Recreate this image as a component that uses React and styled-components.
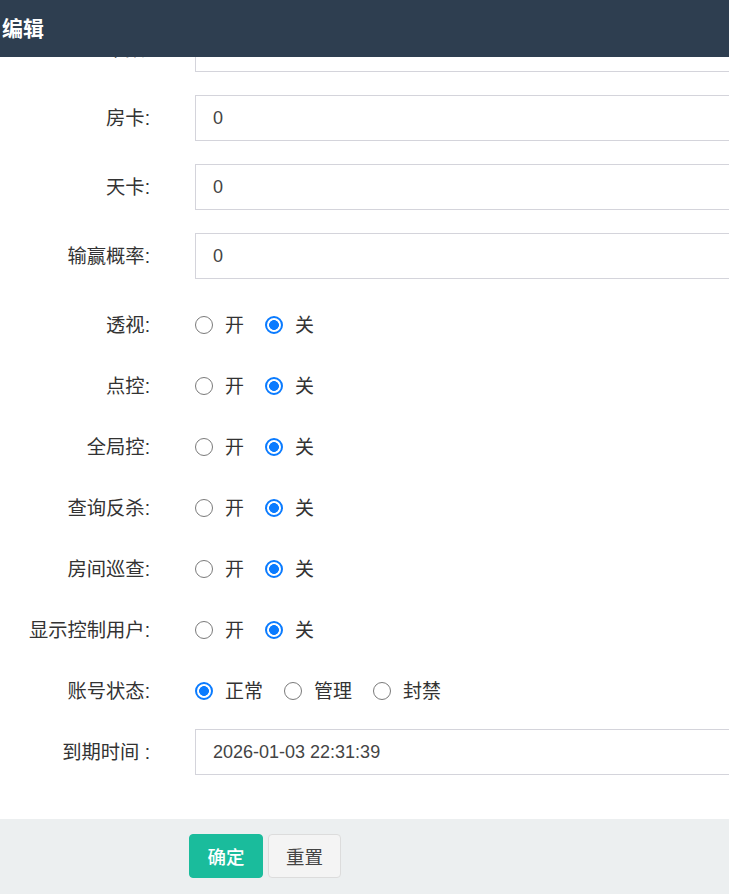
import React from "react";
import styled, { createGlobalStyle } from "styled-components";

const Global = createGlobalStyle`
  html, body { margin: 0; padding: 0; background: #fff; overflow: hidden; }
  * { box-sizing: border-box; }
  body { font-family: "Liberation Sans", "Noto Sans CJK SC", sans-serif; }
`;

const Layer = styled.div`
  display: flex;
  flex-direction: column;
  width: 100%;
  height: 894px;
  overflow: hidden;
  background: #fff;
`;

const Title = styled.div`
  flex: 0 0 57px;
  height: 57px;
  display: flex;
  align-items: center;
  padding: 0 0 4px 2px;
  background: #2e3e50;
  color: #fff;
  font-size: 21px;
  font-weight: bold;
  position: relative;
  z-index: 1;
`;

const Content = styled.div`
  flex: 1 1 auto;
  overflow: hidden;
`;

/* the form is scrolled: its first row sits partly under the title bar */
const Form = styled.div`
  display: flex;
  flex-direction: column;
  margin-top: -31px;
`;

const Row = styled.div`
  display: flex;
  align-items: center;
  height: ${(p) => (p.$radio ? "38px" : "46px")};
  padding-top: ${(p) => (p.$radio ? "8px" : "0")};
  margin-bottom: 23px;
`;

const Label = styled.div`
  flex: 0 0 150px;
  margin-right: 45px;
  text-align: right;
  font-size: 19.3px;
  line-height: 1;
  padding-top: ${(p) => (p.$radio ? "1px" : "2px")};
  color: #333;
  white-space: nowrap;
`;

const Input = styled.input`
  flex: 1 1 auto;
  min-width: 0;
  height: 46px;
  margin-right: -4px;
  border: 1px solid #d4d4db;
  border-radius: 0;
  padding: 0 0 0 17px;
  font-family: "Liberation Sans", "Noto Sans CJK SC", sans-serif;
  font-size: 18px;
  color: #444;
  background: #fff;
  outline: none;
`;

const RadioGroup = styled.div`
  display: flex;
  align-items: center;
`;

const Option = styled.label`
  display: flex;
  align-items: center;
  margin-right: 21px;
  font-size: 19px;
  line-height: 1;
  color: #333;
  cursor: pointer;
`;

const RadioInput = styled.input`
  appearance: none;
  -webkit-appearance: none;
  width: 18px;
  height: 18px;
  margin: 0 12px 0 0;
  border-radius: 50%;
  border: 1.5px solid #7a7a7a;
  background: #fff;
  &:checked {
    border: 2px solid #0a7bff;
    background: radial-gradient(circle, #0a7bff 0 4.6px, #fff 5.2px);
  }
`;

const Footer = styled.div`
  flex: 0 0 75px;
  background: #eceff0;
  display: flex;
  align-items: flex-start;
  padding: 15px 0 0 189px;
  gap: 5px;
`;

const Button = styled.button`
  height: 44px;
  width: ${(p) => p.$w}px;
  border-radius: 4px;
  font-family: "Liberation Sans", "Noto Sans CJK SC", sans-serif;
  font-size: 18.5px;
  cursor: pointer;
  padding: 0;
  border: 1px solid ${(p) => (p.$primary ? "#1abc9c" : "#dcdcdc")};
  background: ${(p) => (p.$primary ? "#1abc9c" : "#f4f4f4")};
  color: ${(p) => (p.$primary ? "#fff" : "#444")};
  font-weight: ${(p) => (p.$primary ? 500 : 400)};
`;

const inputRows = [
  { label: "金币数:", value: "0" },
  { label: "房卡:", value: "0" },
  { label: "天卡:", value: "0" },
  { label: "输赢概率:", value: "0" },
];

const switchRows = ["透视:", "点控:", "全局控:", "查询反杀:", "房间巡查:", "显示控制用户:"];

function RadioRow({ label, name, options, checked }) {
  return (
    <Row $radio>
      <Label $radio>{label}</Label>
      <RadioGroup>
        {options.map((o) => (
          <Option key={o}>
            <RadioInput type="radio" name={name} defaultChecked={o === checked} />
            {o}
          </Option>
        ))}
      </RadioGroup>
    </Row>
  );
}

export default function App() {
  return (
    <>
      <Global />
      <Layer>
        <Title>编辑</Title>
        <Content>
          <Form>
            {inputRows.map((r) => (
              <Row key={r.label}>
                <Label>{r.label}</Label>
                <Input defaultValue={r.value} />
              </Row>
            ))}
            {switchRows.map((l, i) => (
              <RadioRow key={l} label={l} name={"sw" + i} options={["开", "关"]} checked="关" />
            ))}
            <RadioRow label="账号状态:" name="status" options={["正常", "管理", "封禁"]} checked="正常" />
            <Row>
              <Label>到期时间 :</Label>
              <Input defaultValue="2026-01-03 22:31:39" />
            </Row>
          </Form>
        </Content>
        <Footer>
          <Button $primary $w={74}>确定</Button>
          <Button $w={73}>重置</Button>
        </Footer>
      </Layer>
    </>
  );
}
